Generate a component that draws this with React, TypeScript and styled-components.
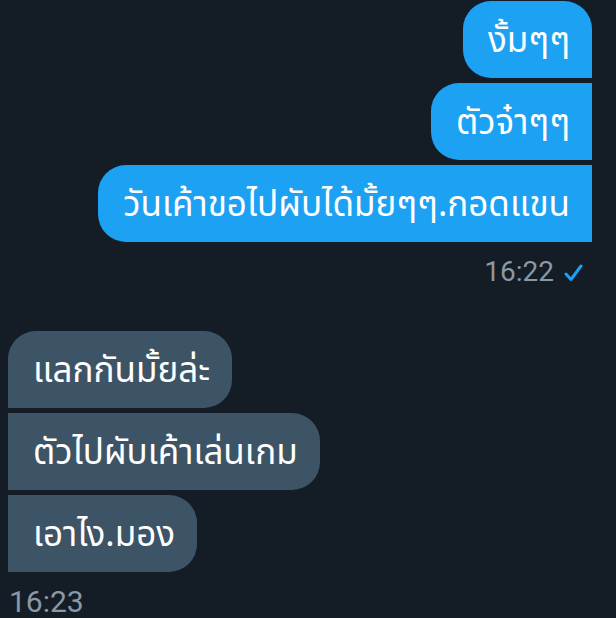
import React from "react";
import styled, { createGlobalStyle, css } from "styled-components";

const Global = createGlobalStyle`
  html, body { margin: 0; padding: 0; background: #141d26; }
  body { font-family: "Noto Sans", "Noto Sans Thai", Roboto, sans-serif; }
`;

const Page = styled.div`
  width: 616px;
  height: 618px;
  overflow: hidden;
  background: #141d26;
  box-sizing: border-box;
  padding: 1px 24px 0 8px;
  display: flex;
  flex-direction: column;
`;

const Group = styled.div<{ $side: "sent" | "recv" }>`
  display: flex;
  flex-direction: column;
  align-items: ${(p) => (p.$side === "sent" ? "flex-end" : "flex-start")};
  gap: 5px;
`;

const Bubble = styled.div<{ $side: "sent" | "recv"; $first?: boolean }>`
  box-sizing: border-box;
  height: 77px;
  display: flex;
  align-items: center;
  padding: 0 22px 3px 25px;
  font-size: 35px;
  line-height: 1;
  color: #ffffff;
  white-space: nowrap;
  border-radius: 28px;
  ${(p) =>
    p.$side === "sent"
      ? css`
          background: #1da1f2;
          border-bottom-right-radius: 0;
          border-top-right-radius: ${p.$first ? "28px" : "0"};
        `
      : css`
          background: #3d5466;
          border-bottom-left-radius: 0;
          border-top-left-radius: ${p.$first ? "28px" : "0"};
        `}
`;

const Meta = styled.div<{ $side: "sent" | "recv" }>`
  display: flex;
  align-items: center;
  justify-content: ${(p) => (p.$side === "sent" ? "flex-end" : "flex-start")};
  gap: 10px;
  font-family: Roboto, "Liberation Sans", sans-serif;
  font-size: ${(p) => (p.$side === "sent" ? "28px" : "30px")};
  color: #8b98a5;
  line-height: 1;
  padding: ${(p) => (p.$side === "sent" ? "16px 9px 0 0" : "15px 0 0 1px")};
`;

const Check = styled.svg`
  width: 19px;
  height: 18px;
  margin-top: 2px;
`;

const Spacer = styled.div`
  height: 45px;
`;

export default function App() {
  return (
    <>
      <Global />
      <Page>
        <Group $side="sent">
          <Bubble $side="sent" $first>งั้มๆๆ</Bubble>
          <Bubble $side="sent">ตัวจ๋าๆๆ</Bubble>
          <Bubble $side="sent">วันเค้าขอไปผับได้มั้ยๆๆ.กอดแขน</Bubble>
        </Group>
        <Meta $side="sent">
          <span>16:22</span>
          <Check viewBox="0 0 19 18">
            <path d="M2 10 L7 15.5 L17 2" fill="none" stroke="#1da1f2" strokeWidth="3" strokeLinecap="round" strokeLinejoin="round" />
          </Check>
        </Meta>
        <Spacer />
        <Group $side="recv">
          <Bubble $side="recv" $first>แลกกันมั้ยล่ะ</Bubble>
          <Bubble $side="recv">ตัวไปผับเค้าเล่นเกม</Bubble>
          <Bubble $side="recv">เอาไง.มอง</Bubble>
        </Group>
        <Meta $side="recv">
          <span>16:23</span>
        </Meta>
      </Page>
    </>
  );
}
